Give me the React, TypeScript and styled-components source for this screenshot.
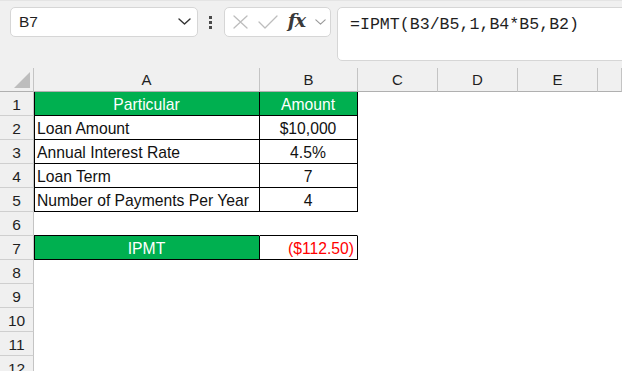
import React from "react";
import styled, { createGlobalStyle } from "styled-components";

const Global = createGlobalStyle`
  html, body { margin: 0; padding: 0; background: #ffffff; overflow: hidden; }
  body { font-family: "Liberation Sans", Arial, sans-serif; }
  * { box-sizing: border-box; }
`;

const Page = styled.div`
  width: 622px;
  height: 371px;
  overflow: hidden;
  background: #ffffff;
`;

const Toolbar = styled.div`
  height: 68px;
  background: #f0f0f0;
  display: flex;
  align-items: flex-start;
  padding: 6px 0 0 10px;
  border-top: 1px solid #e4e4e4;
`;

const Box = styled.div`
  height: 30px;
  background: #ffffff;
  border: 1px solid #d6d6d6;
  border-radius: 5px;
  display: flex;
  align-items: center;
`;

const NameBox = styled(Box)`
  width: 188px;
  padding: 0 6px 0 8px;
  justify-content: space-between;
  font-size: 15.5px;
  color: #1f1f1f;
`;

const Grip = styled.div`
  width: 26px;
  height: 30px;
  display: flex;
  flex-direction: column;
  align-items: center;
  justify-content: center;
  gap: 2px;
  padding-right: 2px;
`;

const Dot = styled.span`
  width: 3px;
  height: 3px;
  background: #4a4a4a;
`;

const FxBox = styled(Box)`
  width: 107px;
  padding: 0 4px 0 8px;
  justify-content: space-between;
`;

const FxText = styled.span`
  font-family: "DejaVu Serif", "Liberation Serif", serif;
  font-style: italic;
  font-weight: bold;
  font-size: 19px;
  color: #3a3a3a;
  line-height: 1;
  margin-top: -3px;
  letter-spacing: -1px;
`;

const FormulaBox = styled(Box)`
  flex: 1;
  height: 54px;
  margin-left: 6px;
  margin-right: -10px;
  align-items: flex-start;
  padding: 7px 0 0 12px;
  font-family: "Liberation Mono", "Courier New", monospace;
  font-size: 16.6px;
  color: #1f1f1f;
  white-space: nowrap;
`;

const Sheet = styled.div`
  display: grid;
  grid-template-columns: 34px 226px 98px 80px 80px 80px 1fr;
  grid-auto-rows: 24px;
`;

const Corner = styled.div`
  background: #f0f0f0;
  border-right: 1px solid #c4c4c4;
  border-bottom: 1px solid #b0b0b0;
  position: relative;
`;

const Triangle = styled.div`
  position: absolute;
  right: 3px;
  bottom: 3px;
  width: 0;
  height: 0;
  border-left: 16px solid transparent;
  border-bottom: 16px solid #bdbdbd;
`;

const ColHead = styled.div`
  background: #f0f0f0;
  border-right: 1px solid #c4c4c4;
  border-bottom: 1px solid #b0b0b0;
  display: flex;
  align-items: flex-end;
  justify-content: center;
  font-size: 15px;
  line-height: 18px;
  padding-bottom: 2px;
  color: #1f1f1f;
`;

const RowHead = styled.div`
  background: #f0f0f0;
  border-right: 1px solid #c4c4c4;
  border-bottom: 1px solid #cfcfcf;
  display: flex;
  align-items: flex-end;
  justify-content: center;
  font-size: 15.5px;
  line-height: 18px;
  padding-bottom: 1px;
  color: #1f1f1f;
`;

type CellProps = {
  $fill?: "green" | "white";
  $align?: "left" | "center" | "right";
  $boxed?: boolean;
  $under?: boolean;
  $leftEdge?: boolean;
  $red?: boolean;
};

const Cell = styled.div<CellProps>`
  background: ${(p) => (p.$fill === "green" ? "#00b050" : "#ffffff")};
  color: ${(p) => (p.$fill === "green" ? "#ffffff" : p.$red ? "#ff0000" : "#111111")};
  border-right: 1px solid ${(p) => (p.$boxed ? "#000000" : "transparent")};
  border-bottom: 1px solid ${(p) => (p.$boxed || p.$under ? "#000000" : "transparent")};
  border-left: ${(p) => (p.$leftEdge ? "1px solid #000000" : "none")};
  display: flex;
  align-items: flex-end;
  justify-content: ${(p) =>
    p.$align === "center" ? "center" : p.$align === "right" ? "flex-end" : "flex-start"};
  padding: 0 3px 1px 2px;
  font-size: 15.7px;
  line-height: 18px;
  white-space: nowrap;
  overflow: hidden;
`;

const Chevron = ({ size = 13, color = "#333" }: { size?: number; color?: string }) => (
  <svg width={size} height={size * 0.55} viewBox="0 0 13 7" fill="none">
    <path d="M1 1 L6.5 6 L12 1" stroke={color} strokeWidth="1.4" strokeLinecap="round" strokeLinejoin="round" />
  </svg>
);

const XIcon = () => (
  <svg width="15" height="14" viewBox="0 0 15 14" fill="none">
    <path d="M1 1 L14 13 M14 1 L1 13" stroke="#bdbdbd" strokeWidth="1.3" strokeLinecap="round" />
  </svg>
);

const CheckIcon = () => (
  <svg width="20" height="14" viewBox="0 0 20 14" fill="none">
    <path d="M1 7 L7 13 L19 1" stroke="#bdbdbd" strokeWidth="1.3" strokeLinecap="round" strokeLinejoin="round" />
  </svg>
);

type Row = {
  n: number;
  a?: string;
  b?: string;
  kind?: "head" | "data" | "result";
  underline?: boolean;
};

const rows: Row[] = [
  { n: 1, a: "Particular", b: "Amount", kind: "head" },
  { n: 2, a: "Loan Amount", b: "$10,000", kind: "data" },
  { n: 3, a: "Annual Interest Rate", b: "4.5%", kind: "data" },
  { n: 4, a: "Loan Term", b: "7", kind: "data" },
  { n: 5, a: "Number of Payments Per Year", b: "4", kind: "data" },
  { n: 6, underline: true },
  { n: 7, a: "IPMT", b: "($112.50)", kind: "result" },
  { n: 8 },
  { n: 9 },
  { n: 10 },
  { n: 11 },
  { n: 12 },
];

const cols = ["A", "B", "C", "D", "E", ""];

export default function App() {
  return (
    <Page>
      <Global />
      <Toolbar>
        <NameBox>
          <span>B7</span>
          <Chevron />
        </NameBox>
        <Grip>
          <Dot />
          <Dot />
          <Dot />
        </Grip>
        <FxBox>
          <XIcon />
          <CheckIcon />
          <FxText>fx</FxText>
          <Chevron size={11} color="#9a9a9a" />
        </FxBox>
        <FormulaBox>=IPMT(B3/B5,1,B4*B5,B2)</FormulaBox>
      </Toolbar>
      <Sheet>
        <Corner>
          <Triangle />
        </Corner>
        {cols.map((c, i) => (
          <ColHead key={i}>{c}</ColHead>
        ))}
        {rows.map((r) => {
          const green = r.kind === "head" || r.kind === "result";
          return (
            <React.Fragment key={r.n}>
              <RowHead>{r.n}</RowHead>
              <Cell
                $boxed={!!r.kind}
                $under={r.underline}
                $leftEdge={!!r.kind}
                $fill={green ? "green" : "white"}
                $align={green ? "center" : "left"}
              >
                {r.a}
              </Cell>
              <Cell
                $boxed={!!r.kind}
                $under={r.underline}
                $fill={r.kind === "head" ? "green" : "white"}
                $align={r.kind === "result" ? "right" : "center"}
                $red={r.kind === "result"}
              >
                {r.b}
              </Cell>
              <Cell />
              <Cell />
              <Cell />
              <Cell />
            </React.Fragment>
          );
        })}
      </Sheet>
    </Page>
  );
}
